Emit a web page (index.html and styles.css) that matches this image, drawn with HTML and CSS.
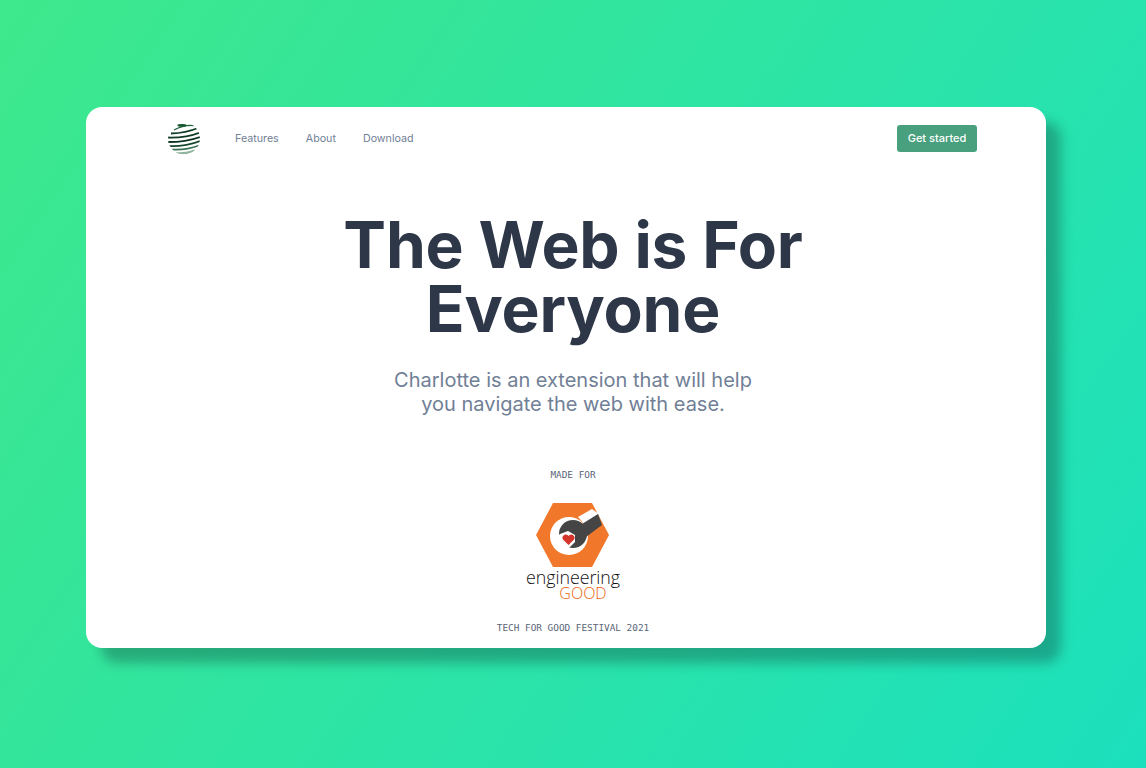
FILE: index.html
```html
<!DOCTYPE html>
<html lang="en">
<head>
<meta charset="utf-8">
<title>Charlotte</title>
<link rel="stylesheet" href="styles.css">
</head>
<body>
<main class="card">
  <header class="topbar">
    <div class="topbar-left">
      <svg class="globe" viewBox="0 0 32 33" aria-label="Charlotte logo">
        <defs><clipPath id="ball"><circle cx="16" cy="16.5" r="16"/></clipPath></defs>
        <g clip-path="url(#ball)" fill="none">
          <ellipse cx="14" cy="3.4" rx="4.6" ry="1.4" fill="#14552f"/>
          <path d="M6 8Q16 2.5 26 3.5" stroke="#1d5e38" stroke-width="1.3"/>
          <path d="M3 11.5Q18 11 30 6" stroke="#123f27" stroke-width="1.8"/>
          <path d="M0 15.5Q18 16 32 10.5" stroke="#0f3a22" stroke-width="1.8"/>
          <path d="M0 20Q18 20 32 15" stroke="#0e3520" stroke-width="1.8"/>
          <path d="M1 24Q18 24.5 32 19" stroke="#17482c" stroke-width="1.7"/>
          <path d="M3 27.5Q18 28.5 31 23.5" stroke="#3a7553" stroke-width="1.6"/>
          <path d="M8 31Q18 32 27 28.5" stroke="#8fb39d" stroke-width="2"/>
        </g>
      </svg>
      <nav class="nav">
        <a class="nav-link" href="#">Features</a>
        <a class="nav-link" href="#">About</a>
        <a class="nav-link" href="#">Download</a>
      </nav>
    </div>
    <a class="cta" href="#">Get started</a>
  </header>
  <section class="hero">
    <h1 class="title">The Web is For<br>Everyone</h1>
    <p class="lead">Charlotte is an extension that will help<br>you navigate the web with ease.</p>
    <p class="mono made">MADE FOR</p>
    <svg class="partner" viewBox="518 498 110 110" role="img" aria-label="engineering GOOD logo">
      <polygon points="536,535 553,503 592,503 609,535 592,567 553,567" fill="#f1782b"/>
      <circle cx="569" cy="536" r="19" fill="#fff"/>
      <polygon points="578,517 592,509 599,514 586,526" fill="#fff"/>
      <circle cx="573" cy="534" r="14" fill="#454545"/>
      <polygon points="582,524 598,514 602,525 586,537" fill="#454545"/>
      <polygon points="560,534 568,531 575,535 575,542 569,548 555,548 555,538" fill="#fff"/>
      <path d="M568.5 545l-5.3-5.3a3.2 3.2 0 0 1 4.6-4.4l.7.7.7-.7a3.2 3.2 0 0 1 4.6 4.4z" fill="#d4352a"/>
      <text class="eg-word" x="573" y="583.5">engineering</text>
      <text class="eg-good" x="583" y="599">GOOD</text>
    </svg>
    <p class="mono festival">TECH FOR GOOD FESTIVAL 2021</p>
  </section>
</main>
</body>
</html>
```

FILE: styles.css
```css
* { box-sizing: border-box; }
html, body { margin: 0; height: 100%; }
body {
  width: 1146px;
  height: 768px;
  overflow: hidden;
  padding: 107px 100px 0 86px;
  background: linear-gradient(124deg, #3ee88c 0%, #1ce0bd 100%);
  font-family: Inter, "Liberation Sans", sans-serif;
}
.card {
  width: 960px;
  height: 541px;
  background: #fff;
  border-radius: 16px;
  box-shadow: 15px 15px 12px rgba(20, 70, 60, 0.36);
  overflow: hidden;
}
.topbar {
  height: 63px;
  padding: 0 69px 1px 82px;
  display: flex;
  align-items: center;
  justify-content: space-between;
}
.topbar-left { display: flex; align-items: center; }
.globe { width: 32px; height: 33px; display: block; filter: blur(0.3px); }
.nav { display: flex; gap: 27px; margin-left: 35px; }
.nav-link {
  font-size: 10.7px;
  color: #718096;
  text-decoration: none;
}
.cta {
  width: 80px;
  height: 27px;
  display: flex;
  align-items: center;
  justify-content: center;
  background: #48a07e;
  border-radius: 3px;
  color: #fff;
  font-size: 11px;
  font-weight: 500;
  text-decoration: none;
}
.hero {
  display: flex;
  flex-direction: column;
  align-items: center;
  text-align: center;
  padding-left: 14px;
}
.title {
  margin: 43px 0 0;
  font-size: 64px;
  line-height: 64px;
  font-weight: 700;
  letter-spacing: -0.2px;
  color: #2d3748;
}
.lead {
  margin: 27px 0 0;
  font-size: 20px;
  line-height: 24px;
  color: #718096;
}
.mono {
  margin: 0;
  font-family: "DejaVu Sans Mono", "Liberation Mono", monospace;
  font-size: 9.4px;
  line-height: 12px;
  color: #5a6576;
}
.made { margin-top: 53px; }
.partner { width: 110px; height: 110px; margin-top: 17px; display: block; }
.eg-word {
  font-family: "Open Sans", sans-serif;
  font-size: 17.8px;
  font-weight: 300;
  fill: #111;
  text-anchor: middle;
}
.eg-good {
  font-family: "Open Sans", sans-serif;
  font-size: 16px;
  font-weight: 300;
  fill: #ea640c;
  text-anchor: middle;
}
.festival { margin-top: 14px; }
```
